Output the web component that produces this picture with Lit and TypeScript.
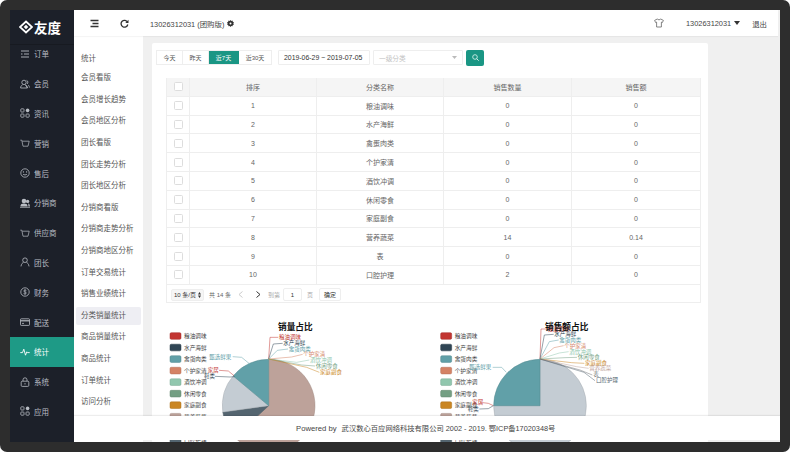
import { LitElement, css, html, svg } from 'lit';
import { customElement } from 'lit/decorators.js';

// sidebar icons, all drawn on a 10x10 box
const icons: Record<string, unknown> = {
  order: svg`<path d="M1 2h8M1 5h1.5M4 5h5M1 8h8" fill="none" stroke="currentColor" stroke-width=".9"/>`,
  member: svg`<circle cx="4" cy="3.4" r="2.2" fill="none" stroke="currentColor" stroke-width=".8"/><path d="M.6 9c0-2 1.2-2.8 2-3.2M5.4 5.8c.8.4 2 1.2 2 3.2ZM.6 9h6.8M6.6 1.4c1.4.3 1.8 2.6.5 3.6M8 6c.8.4 1.4 1.200 1.400 2.600" fill="none" stroke="currentColor" stroke-width=".8"/>`,
  grid: svg`<rect x=".8" y=".8" width="3.2" height="3.2" rx=".7" fill="none" stroke="currentColor" stroke-width=".8"/><rect x=".8" y="6" width="3.2" height="3.2" rx=".7" fill="none" stroke="currentColor" stroke-width=".8"/><rect x="6" y="6" width="3.200" height="3.2" rx=".7" fill="none" stroke="currentColor" stroke-width=".8"/><circle cx="7.600" cy="2.400" r="1.800" fill="currentColor"/>`,
  cart: svg`<path d="M.3 2.200h1.500l1.200 6h5l1.200-5H2.200" fill="none" stroke="currentColor" stroke-width=".7"/>`,
  smile: svg`<circle cx="5" cy="5" r="4.200" fill="none" stroke="currentColor" stroke-width=".8"/><path d="M3 6.200c1 .9 3 .9 4 0" fill="none" stroke="currentColor" stroke-width=".8"/><circle cx="3.400" cy="3.900" r=".6" fill="currentColor"/><circle cx="6.600" cy="3.900" r=".6" fill="currentColor"/>`,
  group: svg`<circle cx="4" cy="3" r="2.300" fill="currentColor"/><circle cx="7.600" cy="3.400" r="1.700" fill="currentColor"/><path d="M.4 8.600c0-2.400 1.600-3 3.600-3s3.600.6 3.600 3ZM8.200 5.600c1 .2 1.700.9 1.700 3H8.400Z" fill="currentColor"/><path d="M0 9.400h10" stroke="currentColor" stroke-width=".7"/>`,
  person: svg`<circle cx="5" cy="3.200" r="2.300" fill="none" stroke="currentColor" stroke-width=".8"/><path d="M1 9.400c.2-2.600 1.700-3.700 2.500-4M9 9.400c-.2-2.600-1.700-3.700-2.500-4" fill="none" stroke="currentColor" stroke-width=".8"/>`,
  money: svg`<circle cx="5" cy="5" r="4.200" fill="none" stroke="currentColor" stroke-width=".8"/><path d="M6.400 3.600C6 2.900 3.700 2.800 3.700 4c0 1.300 2.700.7 2.700 2 0 1.200-2.400 1.100-2.900.4M5 2.200v5.600" fill="none" stroke="currentColor" stroke-width=".7"/>`,
  card: svg`<rect x=".5" y="1.800" width="9" height="6.600" rx=".7" fill="none" stroke="currentColor" stroke-width=".8"/><path d="M.5 3.800h9" stroke="currentColor" stroke-width="1.200"/><path d="M2 6.400h2" stroke="currentColor" stroke-width=".8"/>`,
  pulse: svg`<path d="M.3 5.600h2.200l1.300-3.400 1.700 6 1.300-3.400 .6.800h2.300" fill="none" stroke="currentColor" stroke-width=".9"/>`,
  lock: svg`<rect x="1.200" y="4.200" width="7.600" height="5.200" rx="1" fill="none" stroke="currentColor" stroke-width=".8"/><path d="M3 4.200V2.800a2 2 0 0 1 4 0v1.400M5 6v1.500" fill="none" stroke="currentColor" stroke-width=".8"/>`,
};

const navItems = [
  ['order', '订单'],
  ['member', '会员'],
  ['grid', '资讯'],
  ['cart', '营销'],
  ['smile', '售后'],
  ['group', '分销商'],
  ['cart', '供应商'],
  ['person', '团长'],
  ['money', '财务'],
  ['card', '配送'],
  ['pulse', '统计'],
  ['lock', '系统'],
  ['grid', '应用'],
];

const subItems = [
  '会员看版', '会员增长趋势', '会员地区分析', '团长看版', '团长走势分析', '团长地区分析',
  '分销商看版', '分销商走势分析', '分销商地区分析', '订单交易统计', '销售业绩统计', '分类销量统计',
  '商品销量统计', '商品统计', '订单统计', '访问分析',
];

const rows = [
  [1, '粮油调味', 0, 0],
  [2, '水产海鲜', 0, 0],
  [3, '禽蛋肉类', 0, 0],
  [4, '个护家清', 0, 0],
  [5, '酒饮冲调', 0, 0],
  [6, '休闲零食', 0, 0],
  [7, '家庭副食', 0, 0],
  [8, '营养蔬菜', 14, 0.14],
  [9, '表', 0, 0],
  [10, '口腔护理', 2, 0],
];

const colors = ['#c23531', '#2f4554', '#61a0a8', '#d48265', '#91c7ae', '#749f83', '#ca8622', '#bda29a', '#6e7074', '#546570'];

interface Callout { text: string; x: number; y: number; color: string; points: string }
interface Slice { from: number; to: number; color: string }
interface Chart {
  title: string; titleX: number; cx: number; legendX: number;
  slices: Slice[]; callouts: Callout[];
}

const charts: Chart[] = [
  {
    title: '销量占比', titleX: 406, cx: 326, legendX: 30,
    slices: [
      { from: 0, to: 227, color: '#bda29a' },
      { from: 227, to: 262, color: '#546570' },
      { from: 262, to: 310, color: '#c4ccd3' },
      { from: 310, to: 360, color: '#61a0a8' },
    ],
    callouts: [
      { text: '粮油调味', x: 357, y: 65, color: '#c23531', points: '326,132 330,67 355,67' },
      { text: '水产海鲜', x: 370, y: 84, color: '#2f4554', points: '326,132 340,87 368,85' },
      { text: '禽蛋肉类', x: 386, y: 101, color: '#61a0a8', points: '326,132 352,106 384,102' },
      { text: '个护家清', x: 430, y: 118, color: '#d48265', points: '326,132 395,126 428,118' },
      { text: '酒饮冲调', x: 450, y: 135, color: '#91c7ae', points: '326,132 410,142 448,135' },
      { text: '休闲零食', x: 467, y: 153, color: '#749f83', points: '326,132 425,150 465,153' },
      { text: '家庭副食', x: 480, y: 170, color: '#ca8622', points: '326,132 440,157 478,172' },
      { text: '甄选鲜果', x: 148, y: 125, color: '#61a0a8', points: '218,125 245,127 268,146' },
      { text: '家居', x: 143, y: 165, color: '#c23531', points: '177,166 205,168 222,182' },
      { text: '鞋类', x: 132, y: 184, color: '#2f4554', points: '165,184 210,186 224,185' },
    ],
  },
  {
    title: '销售额占比', titleX: 410, cx: 330, legendX: 32,
    slices: [
      { from: 0, to: 270, color: '#c4ccd3' },
      { from: 270, to: 360, color: '#61a0a8' },
    ],
    callouts: [
      { text: '粮油调味', x: 352, y: 43, color: '#c23531', points: '330,132 333,42 350,42' },
      { text: '水产海鲜', x: 373, y: 58, color: '#2f4554', points: '330,132 343,60 371,58' },
      { text: '禽蛋肉类', x: 388, y: 75, color: '#61a0a8', points: '330,132 358,80 386,75' },
      { text: '个护家清', x: 403, y: 92, color: '#d48265', points: '330,132 372,98 401,92' },
      { text: '酒饮冲调', x: 418, y: 110, color: '#91c7ae', points: '330,132 388,114 416,110' },
      { text: '休闲零食', x: 443, y: 127, color: '#749f83', points: '330,132 405,128 441,127' },
      { text: '家庭副食', x: 465, y: 145, color: '#ca8622', points: '330,132 425,143 463,145' },
      { text: '营养蔬菜', x: 478, y: 160, color: '#bda29a', points: '330,132 440,155 476,160' },
      { text: '表', x: 490, y: 178, color: '#6e7074', points: '330,132 450,165 487,180' },
      { text: '口腔护理', x: 498, y: 196, color: '#546570', points: '330,132 462,172 495,197' },
      { text: '甄选鲜果', x: 118, y: 157, color: '#61a0a8', points: '188,157 215,157 229,172' },
      { text: '家居', x: 127, y: 260, color: '#c23531', points: '150,262 175,265 190,272' },
      { text: '鞋类', x: 113, y: 283, color: '#2f4554', points: '148,282 175,281 190,272' },
    ],
  },
];

function arc(cx: number, cy: number, r: number, from: number, to: number): string {
  const at = (deg: number) => {
    const a = (deg * Math.PI) / 180;
    return `${(cx + r * Math.sin(a)).toFixed(1)} ${(cy - r * Math.cos(a)).toFixed(1)}`;
  };
  return `M${cx} ${cy}L${at(from)}A${r} ${r} 0 ${to - from > 180 ? 1 : 0} 1 ${at(to)}Z`;
}

function darker(hex: string): string {
  const n = parseInt(hex.slice(1), 16);
  const ch = (s: number) => Math.round(((n >> s) & 255) * 0.85);
  return `rgb(${ch(16)},${ch(8)},${ch(0)})`;
}

@customElement('app-root')
export class AppRoot extends LitElement {
  static override styles = css`
    :host {
      display: block;
      width: 790px;
      height: 452px;
      background: #fff;
      font-family: 'Liberation Sans', 'Noto Sans CJK SC', sans-serif;
      color: #555;
    }
    .frame {
      box-sizing: border-box;
      height: 452px;
      padding: 10px;
      background: #2d2d2d;
      border-radius: 7px;
    }
    .window {
      position: relative;
      display: flex;
      height: 432px;
      overflow: hidden;
      background: #f0f0f0;
    }

    .sidebar {
      flex: none;
      width: 64px;
      background: #1c2029;
      color: #b9bdc4;
      font-size: 7.5px;
    }
    .logo {
      position: relative;
      z-index: 1;
      display: flex;
      align-items: center;
      gap: 1px;
      height: 35px;
      padding-left: 9px;
      border-bottom: 1px solid #171a21;
      box-sizing: border-box;
      color: #fff;
      font-size: 13.5px;
      font-weight: 700;
      background: #1c2029;
    }
    .logo svg { width: 14px; height: 14px; }
    .nav { margin-top: -6px; }
    .nav-item {
      display: flex;
      align-items: center;
      gap: 4px;
      height: 29.8px;
      padding-left: 10px;
    }
    .nav-item svg { flex: none; width: 10px; height: 10px; }
    .nav-item.active { background: #1e9a86; color: #fff; }

    .main { flex: 1; min-width: 0; display: flex; flex-direction: column; }
    .topbar {
      flex: none;
      position: relative;
      z-index: 1;
      display: flex;
      align-items: center;
      height: 26px;
      margin-right: 2px;
      background: #fff;
      box-shadow: 0 1px 1px rgba(0, 0, 0, 0.04);
      font-size: 7.4px;
      color: #444;
    }
    .tool { width: 9px; height: 9px; color: #333; }
    .tool.menu { margin-left: 16px; }
    .tool.refresh { margin-left: 21px; }
    .account { margin-left: 21px; }
    .gear { width: 7px; height: 7px; margin-left: 3px; color: #333; }
    .right { margin-left: auto; display: flex; align-items: center; padding-right: 11px; }
    .shirt { width: 10px; height: 10px; color: #666; margin-right: 22px; }
    .caret { width: 6px; height: 4px; margin: 0 12px 0 3px; color: #333; }

    .body { flex: 1; min-height: 0; display: flex; }
    .submenu {
      flex: none;
      box-sizing: border-box;
      width: 69px;
      padding-top: 15px;
      background: #fff;
      font-size: 7.5px;
      color: #555;
    }
    .sub-title { height: 16px; line-height: 16px; padding-left: 7px; margin-bottom: 2.300px; }
    .sub-item {
      height: 18px;
      line-height: 18px;
      margin: 0 2px 3.600px;
      padding-left: 5px;
      border-radius: 2px;
      white-space: nowrap;
    }
    .sub-item.active { background: #eeeef3; }

    .content { flex: 1; min-width: 0; padding: 7px 0 0 9px; }
    .card {
      box-sizing: border-box;
      width: 556px;
      height: 400px;
      padding-top: 7px;
      background: #fff;
      border-radius: 2px;
      font-size: 7px;
    }

    .filters { display: flex; align-items: center; height: 15px; margin-left: 4px; }
    .range { display: flex; height: 15px; border: 1px solid #eee; box-sizing: border-box; font-size: 6px; }
    .range span {
      box-sizing: border-box;
      display: flex;
      align-items: center;
      justify-content: center;
      border-right: 1px solid #eee;
      color: #555;
    }
    .range span:last-child { border-right: 0; }
    .range .w0 { width: 26px; }
    .range .w1 { width: 26px; }
    .range .w2 { width: 30px; }
    .range .w3 { width: 32px; }
    .range .on { background: #1a9684; color: #fff; border-color: #1a9684; }
    .field {
      box-sizing: border-box;
      display: flex;
      align-items: center;
      height: 15px;
      border: 1px solid #eee;
      border-radius: 1px;
    }
    .date { width: 92px; margin-left: 6px; padding-left: 5px; font-size: 6.9px; color: #333; }
    .select {
      width: 90px;
      margin-left: 3px;
      padding: 0 5px;
      justify-content: space-between;
      font-size: 6.700px;
      color: #c4c4c4;
    }
    .select svg { width: 5px; height: 3px; color: #bbb; }
    .search {
      display: flex;
      align-items: center;
      justify-content: center;
      width: 18px;
      height: 16px;
      margin-left: 3px;
      border-radius: 2px;
      background: #1a9684;
    }
    .search svg { width: 7px; height: 7px; color: #cfeee8; }

    .table {
      box-sizing: border-box;
      width: 535px;
      height: 225px;
      margin: 13px 0 0 14px;
      border: 1px solid #eee;
      border-top: 0;
      color: #666;
    }
    .row {
      box-sizing: border-box;
      display: grid;
      grid-template-columns: 23px 127px 127px 128px 1fr;
      height: 18.800px;
      border-bottom: 1px solid #eee;
    }
    .row.head { background: #f5f5f5; }
    .cell {
      display: flex;
      align-items: center;
      justify-content: center;
      border-right: 1px solid #eee;
    }
    .cell:last-child { border-right: 0; }
    .check {
      box-sizing: border-box;
      width: 9px;
      height: 9px;
      border: 1px solid #ddd;
      border-radius: 1.500px;
      background: #fff;
    }

    .pager { display: flex; align-items: center; height: 18px; margin-top: 1px; padding-left: 4px; font-size: 6px; color: #666; }
    .size {
      box-sizing: border-box;
      display: flex;
      align-items: center;
      justify-content: center;
      gap: 2px;
      width: 33px;
      height: 12px;
      border: 1px solid #eee;
      border-radius: 2px;
      background: #f6f6f6;
      color: #333;
    }
    .total { margin-left: 5px; }
    .arrow { width: 5px; height: 7px; }
    .arrow.prev { margin-left: 7px; color: #ccc; }
    .arrow.next { margin-left: 13px; color: #333; }
    .goto { margin-left: 7px; color: #aaa; }
    .unit { color: #aaa; }
    .page-input {
      box-sizing: border-box;
      display: flex;
      align-items: center;
      justify-content: center;
      width: 19px;
      height: 13px;
      margin: 0 5px 0 3px;
      border: 1px solid #eee;
      border-radius: 2px;
      color: #333;
    }
    .ok {
      box-sizing: border-box;
      display: flex;
      align-items: center;
      justify-content: center;
      width: 22px;
      height: 13px;
      margin-left: 6px;
      border: 1px solid #eee;
      border-radius: 2px;
      color: #333;
    }

    .charts { display: flex; gap: 60px; margin: 12px 0 0 8px; }
    .charts svg { flex: none; width: 210px; height: 137px; overflow: visible; }
    .legend-text { font-size: 17px; fill: #444; dominant-baseline: central; }
    .callout-text { font-size: 16.500px; dominant-baseline: central; }
    .chart-title { font-size: 26px; font-weight: 700; fill: #111; text-anchor: middle; dominant-baseline: central; }

    .footer {
      position: absolute;
      left: 64px;
      right: 0;
      bottom: 2px;
      display: flex;
      align-items: center;
      gap: 5px;
      height: 24px;
      padding-left: 222px;
      background: #fff;
      box-shadow: 0 -1px 1px rgba(0, 0, 0, 0.07);
      font-size: 7.300px;
      color: #444;
      white-space: pre;
    }
    .powered { font-size: 7.700px; }
  `;

  private renderChart(chart: Chart) {
    return html`<svg viewBox="0 0 630 411">
      ${colors.map((color, i) => {
        const y = 63 + i * 34.6;
        return svg`<rect x=${chart.legendX} y=${y - 10} width="33" height="20" rx="4" fill=${color} stroke=${darker(color)} stroke-width="1.500"></rect>
          <text class="legend-text" x=${chart.legendX + 42} y=${y}>${rows[i][1]}</text>`;
      })}
      ${chart.slices.map(
        (s) => svg`<path d=${arc(chart.cx, 272, 139, s.from, s.to)} fill=${s.color} stroke=${darker(s.color)} stroke-width="1.500"></path>`,
      )}
      ${chart.callouts.map(
        (c) => svg`<polyline points=${c.points} fill="none" stroke=${c.color} stroke-width="1.500"></polyline>
          <text class="callout-text" x=${c.x} y=${c.y} fill=${c.color}>${c.text}</text>`,
      )}
      <text class="chart-title" x=${chart.titleX} y="37">${chart.title}</text>
    </svg>`;
  }

  override render() {
    return html`
      <div class="frame">
        <div class="window">
          <aside class="sidebar">
            <div class="logo">
              <svg viewBox="0 0 14 14">
                <path d="M7 1.500 13 7l-6 5.500L1 7Z" fill="none" stroke="#fff" stroke-width="1.700"></path>
                <path d="M7 4.800 9.300 7 7 9.200 4.700 7Z" fill="#fff"></path>
              </svg>
              <span>友度</span>
            </div>
            <nav class="nav">
              ${navItems.map(
                ([icon, label]) => html`<div class="nav-item ${label === '统计' ? 'active' : ''}">
                  <svg viewBox="0 0 10 10">${icons[icon]}</svg><span>${label}</span>
                </div>`,
              )}
            </nav>
          </aside>

          <div class="main">
            <header class="topbar">
              <svg class="tool menu" viewBox="0 0 9 9">
                <path d="M.5 1.500h8M2.500 4.500h6M.5 7.500h8" stroke="currentColor" stroke-width="1.300" fill="none"></path>
              </svg>
              <svg class="tool refresh" viewBox="0 0 9 9">
                <path d="M7.500 3.200A3.400 3.400 0 1 0 7.800 5.500" stroke="currentColor" stroke-width="1.300" fill="none"></path>
                <path d="M8.500 .8v3.300H5.300Z" fill="currentColor"></path>
              </svg>
              <span class="account">13026312031 (团购版)</span>
              <svg class="gear" viewBox="0 0 7 7">
                <path d="M3.500 0 4.300 1l1.200-.4.300 1.200L7 2.400 6.300 3.500 7 4.600 5.800 5l-.3 1.200L4.300 6l-.8 1-.8-1-1.200.2L1.200 5 0 4.600.7 3.500 0 2.400l1.200-.6.300-1.200L2.700 1Z" fill="currentColor"></path>
                <circle cx="3.500" cy="3.500" r="1" fill="#fff"></circle>
              </svg>
              <div class="right">
                <svg class="shirt" viewBox="0 0 10 10">
                  <path d="M3.300 1 .6 2.400l1 2.100 1-.4V9h4.800V4.100l1 .4 1-2.100L6.700 1C6.300 2 3.700 2 3.300 1Z" fill="none" stroke="currentColor" stroke-width=".8"></path>
                </svg>
                <span>13026312031</span>
                <svg class="caret" viewBox="0 0 6 4"><path d="M0 0h6L3 4Z" fill="currentColor"></path></svg>
                <span>退出</span>
              </div>
            </header>

            <div class="body">
              <div class="submenu">
                <div class="sub-title">统计</div>
                ${subItems.map(
                  (item) => html`<div class="sub-item ${item === '分类销量统计' ? 'active' : ''}">${item}</div>`,
                )}
              </div>

              <div class="content">
                <section class="card">
                  <div class="filters">
                    <div class="range">
                      <span class="w0">今天</span><span class="w1">昨天</span><span class="w2 on">近7天</span><span class="w3">近30天</span>
                    </div>
                    <div class="field date">2019-06-29 ~ 2019-07-05</div>
                    <div class="field select">
                      <span>一级分类</span>
                      <svg viewBox="0 0 5 3"><path d="M0 0h5L2.500 3Z" fill="currentColor"></path></svg>
                    </div>
                    <div class="search">
                      <svg viewBox="0 0 7 7">
                        <circle cx="3" cy="3" r="2.300" fill="none" stroke="currentColor" stroke-width=".9"></circle>
                        <path d="M4.700 4.700 6.700 6.700" stroke="currentColor" stroke-width="1"></path>
                      </svg>
                    </div>
                  </div>

                  <div class="table">
                    <div class="row head">
                      <div class="cell"><span class="check"></span></div>
                      <div class="cell">排序</div>
                      <div class="cell">分类名称</div>
                      <div class="cell">销售数量</div>
                      <div class="cell">销售额</div>
                    </div>
                    ${rows.map(
                      (r) => html`<div class="row">
                        <div class="cell"><span class="check"></span></div>
                        ${r.map((v) => html`<div class="cell">${v}</div>`)}
                      </div>`,
                    )}
                    <div class="pager">
                      <div class="size">
                        <span>10 条/页</span>
                        <svg width="3" height="6" viewBox="0 0 3 6"><path d="M0 2.500 1.500 0 3 2.500ZM0 3.500 1.500 6 3 3.500Z" fill="#333"></path></svg>
                      </div>
                      <span class="total">共 14 条</span>
                      <svg class="arrow prev" viewBox="0 0 5 7"><path d="M4.500.5 1 3.500l3.500 3" fill="none" stroke="currentColor"></path></svg>
                      <svg class="arrow next" viewBox="0 0 5 7"><path d="M.5.5 4 3.500l-3.500 3" fill="none" stroke="currentColor"></path></svg>
                      <span class="goto">到第</span>
                      <span class="page-input">1</span>
                      <span class="unit">页</span>
                      <span class="ok">确定</span>
                    </div>
                  </div>

                  <div class="charts">${charts.map((c) => this.renderChart(c))}</div>
                </section>
              </div>
            </div>
          </div>

          <footer class="footer"><span class="powered">Powered by</span><span>武汉数心百应网络科技有限公司 2002 - 2019. 鄂ICP备17020348号</span></footer>
        </div>
      </div>
    `;
  }
}

declare global {
  interface HTMLElementTagNameMap {
    'app-root': AppRoot;
  }
}
